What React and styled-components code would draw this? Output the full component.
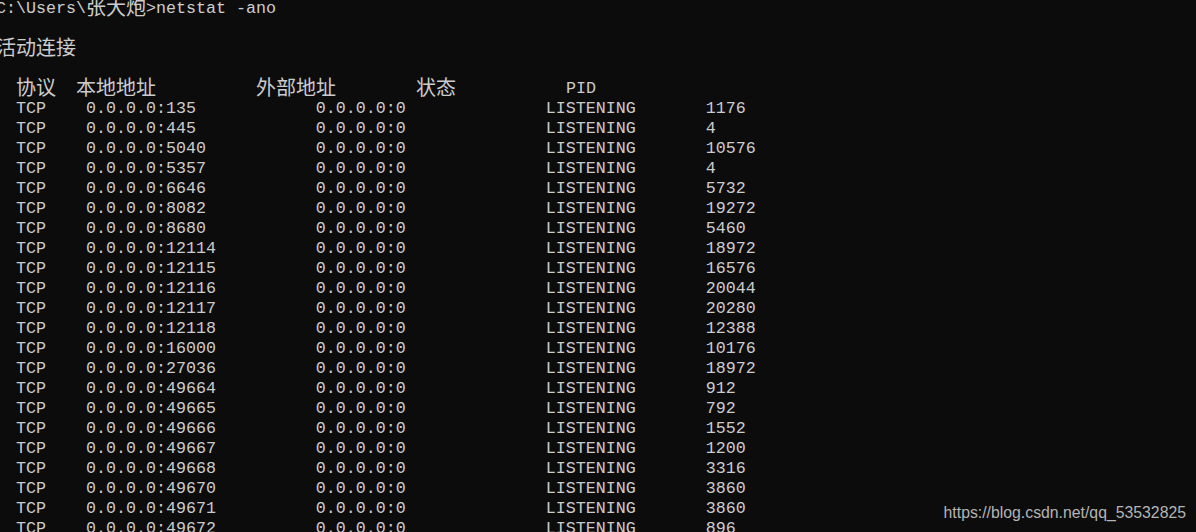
import React from 'react'
import styled, { createGlobalStyle } from 'styled-components'

const rows = [
  ['135', '1176'],
  ['445', '4'],
  ['5040', '10576'],
  ['5357', '4'],
  ['6646', '5732'],
  ['8082', '19272'],
  ['8680', '5460'],
  ['12114', '18972'],
  ['12115', '16576'],
  ['12116', '20044'],
  ['12117', '20280'],
  ['12118', '12388'],
  ['16000', '10176'],
  ['27036', '18972'],
  ['49664', '912'],
  ['49665', '792'],
  ['49666', '1552'],
  ['49667', '1200'],
  ['49668', '3316'],
  ['49670', '3860'],
  ['49671', '3860'],
  ['49672', '896'],
]

const formatRow = ([port, pid]) =>
  '  TCP    ' +
  `0.0.0.0:${port}`.padEnd(23) +
  '0.0.0.0:0'.padEnd(23) +
  'LISTENING'.padEnd(16) +
  pid

export default function App () {
  return (
    <Screen>
      <GlobalStyle />
      <Console>
        <Line>C:\Users\<Cjk>张大炮</Cjk>&gt;netstat -ano</Line>
        <Line />
        <Line><Cjk>活动连接</Cjk></Line>
        <Line />
        <Line>
          {'  '}<Cjk>协议</Cjk>{'  '}<Cjk>本地地址</Cjk>{'          '}
          <Cjk>外部地址</Cjk>{'        '}<Cjk>状态</Cjk>{'           '}PID
        </Line>
        {rows.map((row, i) => (
          <Line key={i}>{formatRow(row)}</Line>
        ))}
      </Console>
      <Watermark>https://blog.csdn.net/qq_53532825</Watermark>
    </Screen>
  )
}

const GlobalStyle = createGlobalStyle`
  html, body {
    margin: 0;
    padding: 0;
    background: #0c0c0c;
  }
`

const Screen = styled.div`
  position: relative;
  width: 1196px;
  height: 532px;
  overflow: hidden;
  background: #0c0c0c;
`

const Console = styled.div`
  margin: -3px 0 0 -4px;
  font-family: "Liberation Mono", "Noto Sans CJK SC", monospace;
  font-size: 16.667px;
  color: #cccccc;
  white-space: pre;
`

const Line = styled.div`
  height: 20px;
  line-height: 24px;
  overflow: visible;
`

const Cjk = styled.span`
  font-family: "Noto Sans CJK SC", sans-serif;
  font-size: 20px;
  line-height: 20px;
  vertical-align: top;
`

const Watermark = styled.div`
  position: absolute;
  right: 10px;
  bottom: 10px;
  font-family: "Liberation Sans", Arial, sans-serif;
  font-size: 15.8px;
  color: #b4b4b4;
`
